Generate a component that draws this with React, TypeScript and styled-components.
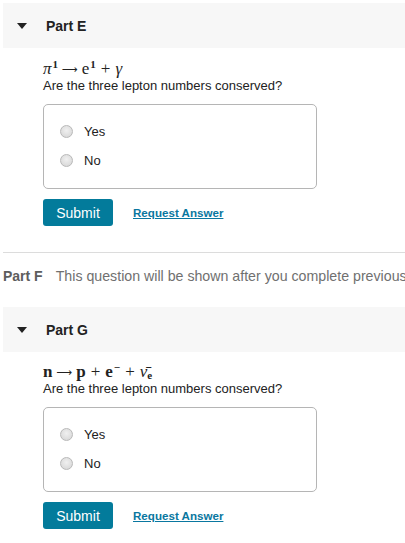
import React from "react";
import styled, { createGlobalStyle } from "styled-components";

const Global = createGlobalStyle`
  html, body { margin: 0; padding: 0; background: #fff; }
  body { font-family: "Liberation Sans", Arial, sans-serif; color: #222; overflow: hidden; }
`;

const Page = styled.div`
  width: 405px;
  padding: 3px 0 0 3px;
  box-sizing: border-box;
  overflow: hidden;
`;

const Section = styled.section`
  display: flex;
  flex-direction: column;
`;

const Header = styled.div`
  height: 45px;
  background: #f7f7f7;
  display: flex;
  align-items: center;
  padding-left: 14px;
  gap: 19px;
  font-size: 14px;
  font-weight: bold;
  color: #222;
`;

const Caret = styled.span`
  width: 0;
  height: 0;
  border-left: 5px solid transparent;
  border-right: 5px solid transparent;
  border-top: 6px solid #222;
  margin-top: 1px;
`;

const Body = styled.div<{ $top: number }>`
  padding: ${(p) => p.$top}px 0 0 40px;
  display: flex;
  flex-direction: column;
  align-items: flex-start;
`;

const Equation = styled.div`
  font-family: "Liberation Serif", "DejaVu Serif", serif;
  font-size: 17px;
  line-height: 19px;
  height: 19px;
  color: #222;
  white-space: nowrap;
`;

const Sup = styled.sup`
  font-size: 11px;
  font-weight: bold;
  vertical-align: 6px;
  line-height: 0;
  margin-left: 1px;
`;

const Sub = styled.sub`
  font-size: 11px;
  font-weight: bold;
  vertical-align: -2px;
  line-height: 0;
`;

const Bold = styled.span`
  font-weight: bold;
`;

const Ital = styled.span`
  font-style: italic;
`;

const Op = styled.span`
  margin: 0 5px;
`;

const Arrow = styled.span`
  font-family: "DejaVu Sans", sans-serif;
  font-size: 11px;
  margin: 0 4px;
  position: relative;
  top: -1px;
`;

const Question = styled.div`
  font-size: 13px;
  line-height: 16px;
  color: #222;
`;

const Choices = styled.div<{ $top: number }>`
  margin-top: ${(p) => p.$top}px;
  width: 274px;
  box-sizing: border-box;
  border: 1px solid #b5b5b5;
  border-radius: 5px;
  padding: 12px 0 13px 16px;
  display: flex;
  flex-direction: column;
`;

const Choice = styled.label`
  height: 29px;
  display: flex;
  align-items: center;
  gap: 11px;
  font-size: 13px;
  color: #222;
`;

const Radio = styled.span`
  width: 11px;
  height: 11px;
  border-radius: 50%;
  border: 1px solid #b9b9b9;
  background: radial-gradient(circle at 50% 40%, #f0f0f0 0%, #dcdcdc 70%, #cfcfcf 100%);
`;

const Actions = styled.div`
  margin-top: 10px;
  display: flex;
  align-items: center;
  gap: 20px;
`;

const SubmitButton = styled.button`
  width: 70px;
  height: 27px;
  border: none;
  border-radius: 3px;
  background: #037b9b;
  color: #fff;
  font-family: "Liberation Sans", Arial, sans-serif;
  font-size: 14px;
  padding: 0;
`;

const Link = styled.a`
  font-size: 11.6px;
  font-weight: bold;
  color: #0a77a0;
  text-decoration: underline;
  margin-top: -1px;
`;

const Divider = styled.hr`
  border: none;
  border-top: 1px solid #dcdcdc;
  margin: 26px 0 0 0;
`;

const Locked = styled.div`
  height: 32px;
  margin-top: 7px;
  display: flex;
  align-items: center;
  gap: 13px;
  font-size: 14px;
  white-space: nowrap;
  color: #707070;
`;

const LockedLabel = styled.span`
  font-weight: bold;
  color: #5d5d5d;
`;

const LockedText = styled.span`
  font-size: 14.2px;
`;

const Spacer = styled.div`
  height: 15px;
`;

function Part({ name, top, boxTop, children }: { name: string; top: number; boxTop: number; children: React.ReactNode }) {
  return (
    <Section>
      <Header>
        <Caret />
        <span>{name}</span>
      </Header>
      <Body $top={top}>
        <Equation>{children}</Equation>
        <Question>Are the three lepton numbers conserved?</Question>
        <Choices $top={boxTop}>
          <Choice><Radio />Yes</Choice>
          <Choice><Radio />No</Choice>
        </Choices>
        <Actions>
          <SubmitButton>Submit</SubmitButton>
          <Link href="#">Request Answer</Link>
        </Actions>
      </Body>
    </Section>
  );
}

export default function App() {
  return (
    <Page>
      <Global />
      <Part name="Part E" top={11} boxTop={10}>
        <Ital>π</Ital><Sup>1</Sup><Arrow>⟶</Arrow>e<Sup>1</Sup><Op>+</Op><Ital>γ</Ital>
      </Part>
      <Divider />
      <Locked>
        <LockedLabel>Part F</LockedLabel>
        <LockedText>This question will be shown after you complete previous question(s).</LockedText>
      </Locked>
      <Spacer />
      <Part name="Part G" top={10} boxTop={10}>
        <Bold>n</Bold><Arrow>⟶</Arrow><Bold>p</Bold><Op>+</Op><Bold>e</Bold><Sup>−</Sup><Op>+</Op>
        <Ital>ν̄</Ital><Sub>e</Sub>
      </Part>
    </Page>
  );
}
